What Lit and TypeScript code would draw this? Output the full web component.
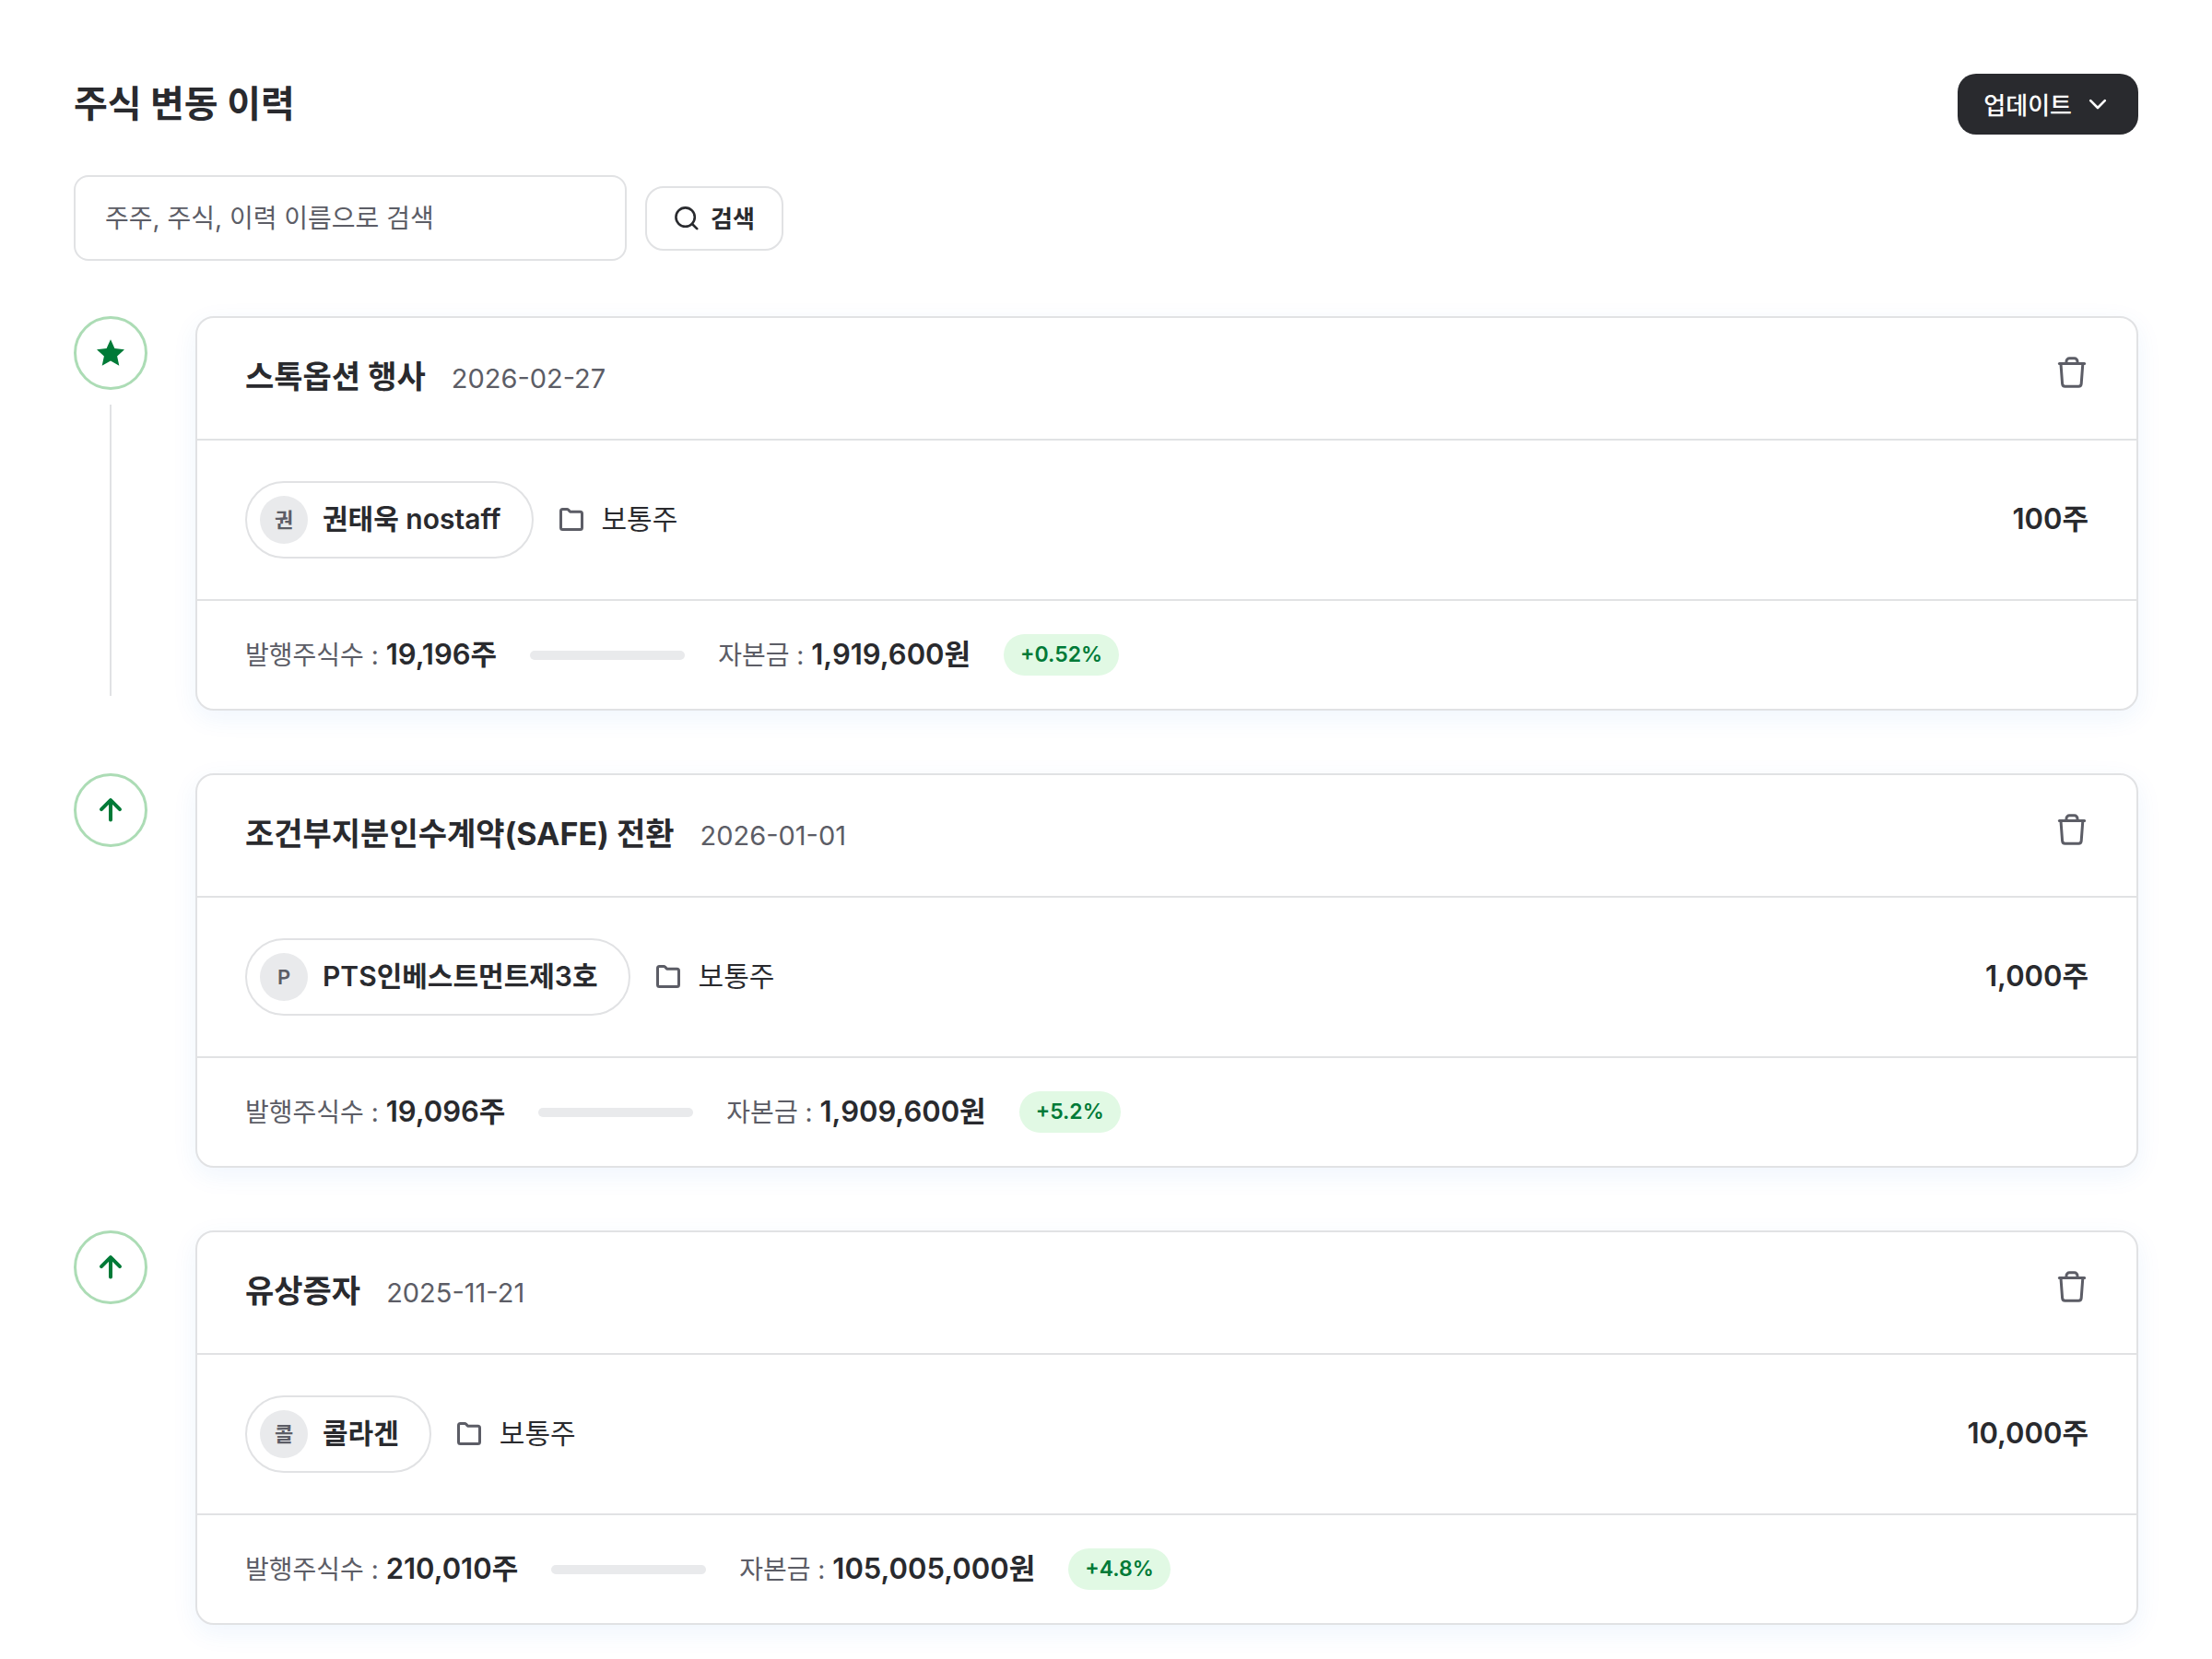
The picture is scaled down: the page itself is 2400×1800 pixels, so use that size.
import { LitElement, html, css, svg, nothing } from "lit";
import { customElement, property } from "lit/decorators.js";

interface Change {
  kind: "star" | "arrow";
  title: string;
  date: string;
  initial: string;
  holder: string;
  stock: string;
  quantity: string;
  issued: string;
  capital: string;
  growth: string;
}

const changes: Change[] = [
  {
    kind: "star",
    title: "스톡옵션 행사",
    date: "2026-02-27",
    initial: "권",
    holder: "권태욱 nostaff",
    stock: "보통주",
    quantity: "100주",
    issued: "19,196주",
    capital: "1,919,600원",
    growth: "+0.52%",
  },
  {
    kind: "arrow",
    title: "조건부지분인수계약(SAFE) 전환",
    date: "2026-01-01",
    initial: "P",
    holder: "PTS인베스트먼트제3호",
    stock: "보통주",
    quantity: "1,000주",
    issued: "19,096주",
    capital: "1,909,600원",
    growth: "+5.2%",
  },
  {
    kind: "arrow",
    title: "유상증자",
    date: "2025-11-21",
    initial: "콜",
    holder: "콜라겐",
    stock: "보통주",
    quantity: "10,000주",
    issued: "210,010주",
    capital: "105,005,000원",
    growth: "+4.8%",
  },
];

const starShape = svg`<path d="M16 1.2l4.4 9.9 10.6 1.2-7.9 7.1 2.2 10.4L16 24.4l-9.3 5.4 2.2-10.4L1 12.3l10.6-1.2z" fill="currentColor"></path>`;
const arrowShape = svg`<path d="M16 26.4V5.4M6 15.2 16 5.2l10 10" fill="none" stroke="currentColor" stroke-width="4" stroke-linecap="round" stroke-linejoin="round"></path>`;

@customElement("history-entry")
export class HistoryEntry extends LitElement {
  @property({ attribute: false }) change!: Change;
  @property({ type: Boolean }) linked = false;

  static styles = css`
    :host {
      display: flex;
      gap: 52px;
    }
    * {
      box-sizing: border-box;
    }
    .rail {
      flex: none;
      width: 80px;
      display: flex;
      flex-direction: column;
      align-items: center;
      gap: 16px;
      padding-bottom: 16px;
    }
    .marker {
      flex: none;
      width: 80px;
      height: 80px;
      border: 3px solid #acdcb5;
      border-radius: 50%;
      display: grid;
      place-items: center;
      color: #007a37;
    }
    .marker svg {
      width: 32px;
      height: 32px;
    }
    .line {
      flex: 1;
      width: 2px;
      background: #e1e2e4;
    }
    .card {
      flex: 1;
      min-width: 0;
      border: 2px solid #e1e2e4;
      border-radius: 20px;
      background: #fff;
      box-shadow: 0 8px 28px rgba(26, 115, 220, 0.07);
    }
    .head {
      display: flex;
      align-items: flex-start;
      justify-content: space-between;
      height: 133px;
      padding: 40px 52px 0;
      border-bottom: 2px solid #e1e2e4;
    }
    .heading {
      display: flex;
      align-items: baseline;
      gap: 28px;
      line-height: 48px;
    }
    h2 {
      margin: 0;
      font-size: 34px;
      font-weight: 700;
      color: #292a2e;
    }
    time {
      font-size: 29px;
      color: #5c5d66;
    }
    .delete {
      padding: 0;
      border: 0;
      background: none;
      color: #5c5d66;
      cursor: pointer;
    }
    .delete svg {
      display: block;
      width: 36px;
      height: 38px;
    }
    .body {
      display: flex;
      align-items: center;
      gap: 24px;
      padding: 44px 52px;
      border-bottom: 2px solid #e1e2e4;
      font-size: 30px;
      line-height: 44px;
      color: #292a2e;
    }
    .holder {
      display: flex;
      align-items: center;
      gap: 16px;
      height: 84px;
      padding: 0 33px 0 14px;
      border: 2px solid #e1e2e4;
      border-radius: 42px;
      font-weight: 600;
    }
    .name,
    .stock-name,
    .quantity {
      padding-bottom: 2px;
    }
    .avatar {
      width: 52px;
      height: 52px;
      border-radius: 50%;
      background: #e9eaec;
      display: grid;
      place-items: center;
      font-size: 22px;
      color: #5c5d66;
    }
    .stock {
      display: flex;
      align-items: center;
      gap: 16px;
    }
    .stock svg {
      width: 34px;
      height: 32px;
      color: #5c5d66;
    }
    .quantity {
      margin-left: auto;
      font-size: 31px;
      font-weight: 600;
    }
    .foot {
      display: flex;
      align-items: center;
      gap: 36px;
      height: 117px;
      padding: 0 52px;
      font-size: 28px;
      line-height: 44px;
      color: #5c5d66;
    }
    .foot strong {
      font-size: 31px;
      font-weight: 600;
      color: #292a2e;
    }
    .bar {
      width: 168px;
      height: 10px;
      border-radius: 5px;
      background: #e9eaec;
    }
    .growth {
      padding: 0 18px;
      border-radius: 23px;
      background: #e1f9e4;
      color: #007a37;
      font-size: 23px;
      font-weight: 600;
      line-height: 45px;
    }
  `;

  render() {
    const c = this.change;
    return html`
      <div class="rail">
        <div class="marker">
          <svg viewBox="0 0 32 32" aria-hidden="true">${c.kind === "star" ? starShape : arrowShape}</svg>
        </div>
        ${this.linked ? html`<div class="line"></div>` : nothing}
      </div>
      <article class="card">
        <header class="head">
          <div class="heading">
            <h2>${c.title}</h2>
            <time datetime=${c.date}>${c.date}</time>
          </div>
          <button class="delete" type="button" aria-label="삭제">
            <svg viewBox="0 0 36 38" fill="none" stroke="currentColor" stroke-width="3" stroke-linejoin="round" stroke-linecap="round" aria-hidden="true">
              <path d="M4.4 9.4h27.2"></path>
              <path d="M12 9.4V7.2a3.4 3.4 0 0 1 3.4-3.4h5.2a3.4 3.4 0 0 1 3.4 3.4v2.2"></path>
              <path d="M6 9.8l1.6 21.6a3 3 0 0 0 3 2.8h14.6a3 3 0 0 0 3-2.8L29.8 9.8"></path>
            </svg>
          </button>
        </header>
        <div class="body">
          <div class="holder"><span class="avatar">${c.initial}</span><span class="name">${c.holder}</span></div>
          <div class="stock">
            <svg viewBox="0 0 34 32" fill="none" stroke="currentColor" stroke-width="3" stroke-linejoin="round" aria-hidden="true">
              <path d="M5.5 6.4a2 2 0 0 1 2-2h4.6a2 2 0 0 1 1.5.7l2 2.1h10.9a2 2 0 0 1 2 2v15.2a2 2 0 0 1-2 2H7.5a2 2 0 0 1-2-2z"></path>
            </svg>
            <span class="stock-name">${c.stock}</span>
          </div>
          <span class="quantity">${c.quantity}</span>
        </div>
        <footer class="foot">
          <span>발행주식수 : <strong>${c.issued}</strong></span>
          <span class="bar"></span>
          <span>자본금 : <strong>${c.capital}</strong></span>
          <span class="growth">${c.growth}</span>
        </footer>
      </article>
    `;
  }
}

@customElement("app-root")
export class AppRoot extends LitElement {
  static styles = css`
    :host {
      display: block;
      padding: 80px;
      background: #fff;
      color: #292a2e;
      font-family: Inter, "Noto Sans CJK KR", sans-serif;
    }
    * {
      box-sizing: border-box;
    }
    button,
    input {
      font-family: inherit;
    }
    .top {
      display: flex;
      align-items: center;
      justify-content: space-between;
    }
    h1 {
      margin: 0;
      font-size: 40px;
      font-weight: 700;
      line-height: 66px;
    }
    .update {
      display: flex;
      align-items: center;
      gap: 14px;
      height: 66px;
      padding: 0 30px 2px 28px;
      border: 0;
      border-radius: 20px;
      background: #292a2e;
      color: #fff;
      font-size: 26px;
      font-weight: 500;
      cursor: pointer;
    }
    .update svg {
      width: 28px;
      height: 28px;
    }
    .search {
      display: flex;
      align-items: center;
      gap: 20px;
      margin: 44px 0 60px;
    }
    .query {
      width: 600px;
      height: 93px;
      padding: 0 32px;
      border: 2px solid #e1e2e4;
      border-radius: 16px;
      background: #fff;
      color: #292a2e;
      font-size: 28px;
    }
    .query::placeholder {
      color: #5c5d66;
      opacity: 1;
    }
    .find {
      display: flex;
      align-items: center;
      gap: 12px;
      height: 70px;
      padding: 0 29px 2px;
      border: 2px solid #e1e2e4;
      border-radius: 20px;
      background: #fff;
      color: #292a2e;
      font-size: 26px;
      font-weight: 600;
      cursor: pointer;
    }
    .find svg {
      width: 28px;
      height: 28px;
    }
    .list {
      display: flex;
      flex-direction: column;
      gap: 68px;
    }
  `;

  render() {
    return html`
      <header class="top">
        <h1>주식 변동 이력</h1>
        <button class="update" type="button">
          업데이트
          <svg viewBox="0 0 28 28" fill="none" stroke="currentColor" stroke-width="2.6" stroke-linecap="round" stroke-linejoin="round" aria-hidden="true">
            <path d="M6.2 11.2l7.8 7.8 7.8-7.8"></path>
          </svg>
        </button>
      </header>
      <form class="search" role="search" @submit=${(e: Event) => e.preventDefault()}>
        <input class="query" type="text" aria-label="주주, 주식, 이력 이름으로 검색" placeholder="주주, 주식, 이력 이름으로 검색" />
        <button class="find" type="submit">
          <svg viewBox="0 0 28 28" fill="none" stroke="currentColor" stroke-width="2.6" stroke-linecap="round" aria-hidden="true">
            <circle cx="12.6" cy="13.6" r="10.2"></circle>
            <path d="M20 21l5.2 5.2"></path>
          </svg>
          검색
        </button>
      </form>
      <main class="list">
        ${changes.map((c, i) => html`<history-entry .change=${c} ?linked=${i === 0}></history-entry>`)}
      </main>
    `;
  }
}
